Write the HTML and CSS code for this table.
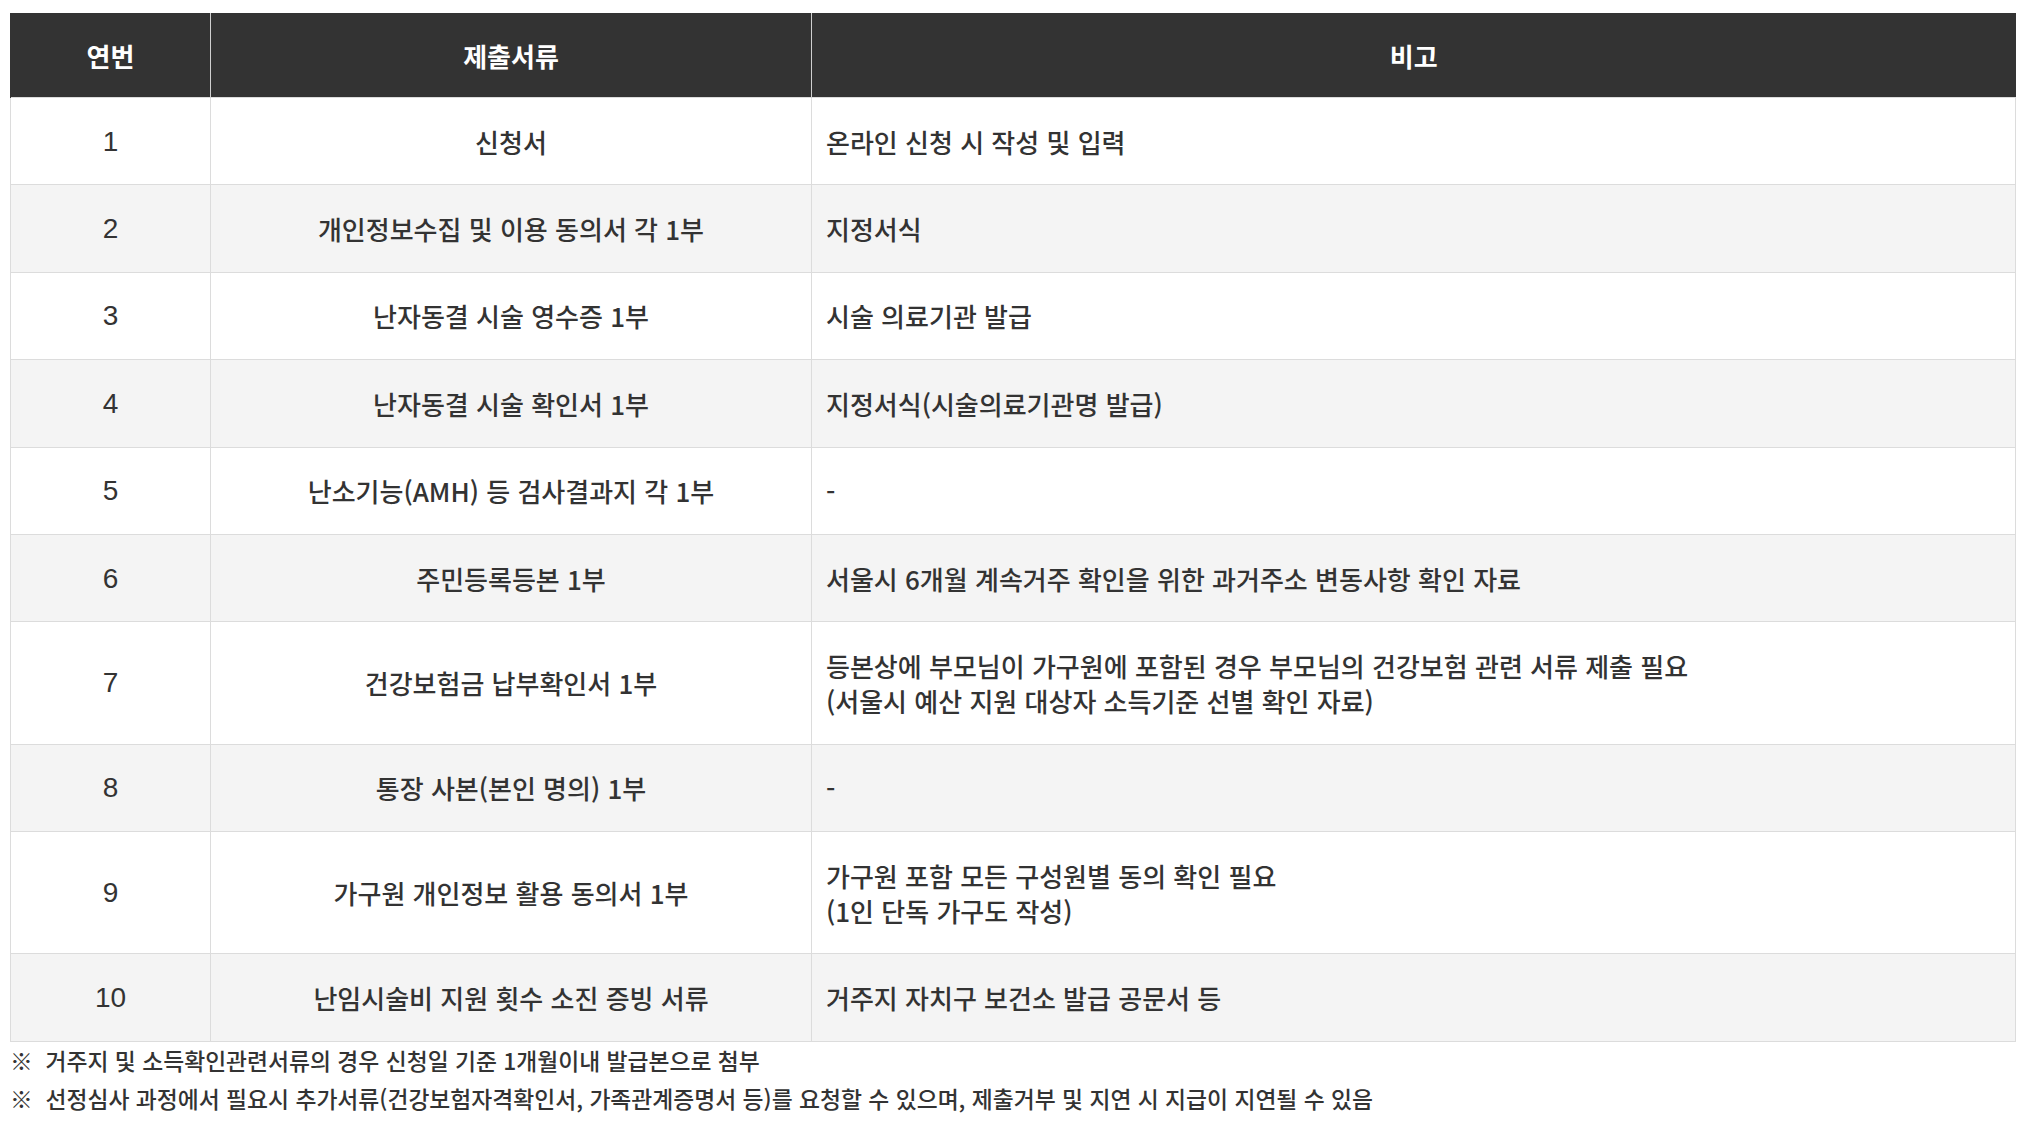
FILE: index.html
```html
<!DOCTYPE html>
<html lang="ko">
<head>
<meta charset="utf-8">
<title>제출서류</title>
<link rel="stylesheet" href="styles.css">
</head>
<body>
<div class="page">
  <table class="doc-table">
    <colgroup>
      <col class="col-no">
      <col class="col-doc">
      <col class="col-note">
    </colgroup>
    <thead>
      <tr>
        <th>연번</th>
        <th>제출서류</th>
        <th>비고</th>
      </tr>
    </thead>
    <tbody>
      <tr><td class="num">1</td><td class="doc">신청서</td><td class="note">온라인 신청 시 작성 및 입력</td></tr>
      <tr><td class="num">2</td><td class="doc">개인정보수집 및 이용 동의서 각 1부</td><td class="note">지정서식</td></tr>
      <tr><td class="num">3</td><td class="doc">난자동결 시술 영수증 1부</td><td class="note">시술 의료기관 발급</td></tr>
      <tr><td class="num">4</td><td class="doc">난자동결 시술 확인서 1부</td><td class="note">지정서식(시술의료기관명 발급)</td></tr>
      <tr><td class="num">5</td><td class="doc">난소기능(AMH) 등 검사결과지 각 1부</td><td class="note">-</td></tr>
      <tr><td class="num">6</td><td class="doc">주민등록등본 1부</td><td class="note">서울시 6개월 계속거주 확인을 위한 과거주소 변동사항 확인 자료</td></tr>
      <tr><td class="num">7</td><td class="doc">건강보험금 납부확인서 1부</td><td class="note">등본상에 부모님이 가구원에 포함된 경우 부모님의 건강보험 관련 서류 제출 필요<br>(서울시 예산 지원 대상자 소득기준 선별 확인 자료)</td></tr>
      <tr><td class="num">8</td><td class="doc">통장 사본(본인 명의) 1부</td><td class="note">-</td></tr>
      <tr><td class="num">9</td><td class="doc">가구원 개인정보 활용 동의서 1부</td><td class="note">가구원 포함 모든 구성원별 동의 확인 필요<br>(1인 단독 가구도 작성)</td></tr>
      <tr><td class="num">10</td><td class="doc">난임시술비 지원 횟수 소진 증빙 서류</td><td class="note">거주지 자치구 보건소 발급 공문서 등</td></tr>
    </tbody>
  </table>
  <ul class="remarks">
    <li>※&nbsp; 거주지 및 소득확인관련서류의 경우 신청일 기준 1개월이내 발급본으로 첨부</li>
    <li>※&nbsp; 선정심사 과정에서 필요시 추가서류(건강보험자격확인서, 가족관계증명서 등)를 요청할 수 있으며, 제출거부 및 지연 시 지급이 지연될 수 있음</li>
  </ul>
</div>
</body>
</html>
```

FILE: styles.css
```css
html, body {
  margin: 0;
  padding: 0;
  background: #ffffff;
}

body {
  font-family: "Noto Sans CJK KR", "Noto Sans", sans-serif;
  color: #333333;
}

.page {
  padding: 13px 0 0 10px;
}

.doc-table {
  width: 2005px;
  border-collapse: collapse;
  table-layout: fixed;
  font-size: 26px;
  font-weight: 500;
  line-height: 35px;
}

.col-no { width: 200px; }
.col-doc { width: 601px; }
.col-note { width: 1204px; }

.doc-table th {
  background: #333333;
  color: #ffffff;
  font-weight: 700;
  text-align: center;
  padding: 24.5px 14px;
  border-left: 1px solid #cfcfcf;
}

.doc-table th:first-child {
  border-left: 1px solid #333333;
}

.doc-table td {
  padding: 25.7px 14px;
  border: 1px solid #dcdcdc;
  vertical-align: middle;
  color: #333333;
}

.doc-table tbody tr:nth-child(even) td {
  background: #f4f4f4;
}

.doc-table td.num {
  text-align: center;
  font-family: "Liberation Sans", "Noto Sans CJK KR", sans-serif;
  font-weight: 400;
  font-size: 28px;
}

.doc-table td.doc {
  text-align: center;
}

.doc-table td.note {
  text-align: left;
}

.remarks {
  list-style: none;
  margin: 0;
  padding: 0;
  font-size: 22.8px;
  font-weight: 500;
  line-height: 38px;
  color: #333333;
}
```
